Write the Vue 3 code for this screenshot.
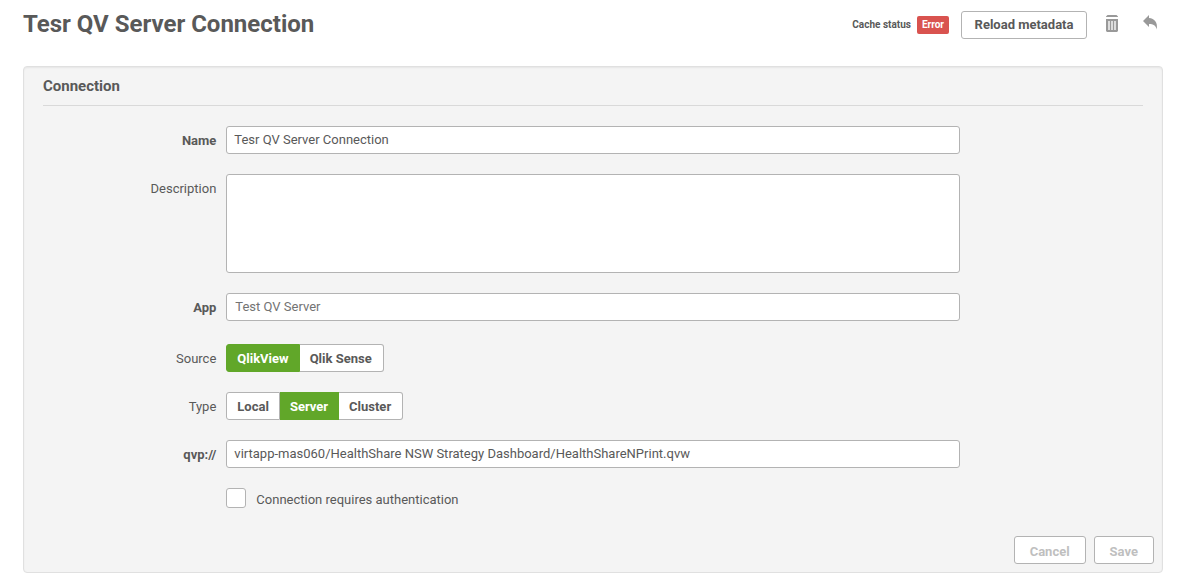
<script setup>
import { ref } from 'vue'

const name = ref('Tesr QV Server Connection')
const description = ref('')
const app = ref('Test QV Server')
const path = ref('virtapp-mas060/HealthShare NSW Strategy Dashboard/HealthShareNPrint.qvw')
const authentication = ref(false)

const sources = ['QlikView', 'Qlik Sense']
const source = ref('QlikView')
const types = ['Local', 'Server', 'Cluster']
const type = ref('Server')
</script>

<template>
  <div class="page">
    <header class="header">
      <h1 class="title">Tesr QV Server Connection</h1>
      <div class="tools">
        <span class="status">Cache status</span>
        <span class="badge">Error</span>
        <button type="button" class="btn reload">Reload metadata</button>
        <button type="button" class="icon-btn" aria-label="Delete">
          <svg width="12" height="17" viewBox="0 0 12 17">
            <path d="M0 2V1.500L1.500 0H10.500L12 1.500V2Z" fill="#999" />
            <path d="M0 4H12V16L11 17H1L0 16Z" fill="#999" />
            <path d="M2 6h2v9H2zM5 6h2v9H5zM8 6h2v9H8z" fill="#ddd" />
          </svg>
        </button>
        <button type="button" class="icon-btn back" aria-label="Back">
          <svg width="15" height="15" viewBox="0 0 15 15">
            <path d="M0 6L6 0V3C11.500 3.500 14.800 7 13.800 14.500C12.800 10.500 10.500 9 6 9V12Z" fill="#999" />
          </svg>
        </button>
      </div>
    </header>

    <form class="panel" @submit.prevent>
      <h2 class="legend">Connection</h2>

      <div class="rows">
        <div class="row">
          <label class="label strong" for="name">Name</label>
          <input id="name" v-model="name" class="field" type="text" />
        </div>
        <div class="row">
          <label class="label" for="description">Description</label>
          <textarea id="description" v-model="description" class="field area"></textarea>
        </div>
        <div class="row app-row">
          <label class="label strong" for="app">App</label>
          <input id="app" v-model="app" class="field muted" type="text" />
        </div>
        <div class="row" role="group" aria-labelledby="source-label">
          <span id="source-label" class="label">Source</span>
          <div class="group">
            <button
              v-for="s in sources"
              :key="s"
              type="button"
              class="btn segment"
              :class="{ active: s === source }"
              :aria-pressed="s === source"
              @click="source = s"
            >{{ s }}</button>
          </div>
        </div>
        <div class="row" role="group" aria-labelledby="type-label">
          <span id="type-label" class="label">Type</span>
          <div class="group">
            <button
              v-for="t in types"
              :key="t"
              type="button"
              class="btn segment"
              :class="{ active: t === type }"
              :aria-pressed="t === type"
              @click="type = t"
            >{{ t }}</button>
          </div>
        </div>
        <div class="row">
          <label class="label strong" for="path">qvp://</label>
          <input id="path" v-model="path" class="field" type="text" />
        </div>
        <div class="row">
          <div class="check">
            <input id="auth" v-model="authentication" type="checkbox" class="box" />
            <label for="auth">Connection requires authentication</label>
          </div>
        </div>
      </div>

      <div class="actions">
        <button type="button" class="btn action" disabled>Cancel</button>
        <button type="submit" class="btn action" disabled>Save</button>
      </div>
    </form>
  </div>
</template>

<style>
body {
  background: #fff;
}
</style>

<style scoped>
.page {
  padding: 0 29px 15px 23px;
  font-family: Roboto, "Liberation Sans", sans-serif;
  font-size: 13px;
  line-height: 20px;
  color: #595959;
}

.page *,
.page {
  box-sizing: border-box;
}

.header {
  display: flex;
  justify-content: space-between;
  align-items: flex-start;
  height: 66px;
}

.title {
  margin: 8px 0 0;
  font-size: 24px;
  line-height: 32px;
  font-weight: 700;
}

.tools {
  display: flex;
  align-items: center;
  margin-top: 11px;
  padding-right: 5px;
}

.status {
  font-size: 10px;
  font-weight: 700;
}

.badge {
  margin: 0 12px 0 6px;
  padding: 0 5px;
  border-radius: 2px;
  background: #d9534f;
  color: #fff;
  font-size: 10px;
  line-height: 18px;
  font-weight: 700;
}

.btn {
  height: 28px;
  margin: 0;
  padding: 0 10px;
  border: 1px solid #b3b3b3;
  border-radius: 3px;
  background: #fff;
  color: #595959;
  font: 700 13px/20px Roboto, "Liberation Sans", sans-serif;
  white-space: nowrap;
}

.reload {
  min-width: 126px;
  margin-right: 19px;
}

.icon-btn {
  display: flex;
  padding: 0;
  border: 0;
  background: none;
  margin-bottom: 3px;
}

.back {
  margin: 0 0 5px 25px;
}

.panel {
  padding: 9px 8px 8px 19px;
  border: 1px solid #e0e0e0;
  border-radius: 4px;
  background: #f4f4f4;
  box-shadow: inset 0 1px 2px rgba(0, 0, 0, 0.06);
}

.legend {
  margin: 0 11px 20px 0;
  padding-bottom: 9px;
  border-bottom: 1px solid #d9d9d9;
  font-size: 15px;
  line-height: 20px;
  font-weight: 700;
}

.rows {
  display: flex;
  flex-direction: column;
  gap: 20px;
  margin-right: 11px;
}

.row {
  display: grid;
  grid-template-columns: 2fr 8fr 2fr;
  align-items: start;
}

.app-row {
  margin-bottom: 3px;
}

.label {
  padding: 5px 10px 0 0;
  text-align: right;
}

.strong {
  font-weight: 700;
}

.field {
  display: block;
  width: 100%;
  height: 28px;
  margin: 0;
  padding: 0 7px 1px;
  border: 1px solid #b3b3b3;
  border-radius: 3px;
  background: #fff;
  color: #595959;
  font: 400 13px/20px Roboto, "Liberation Sans", sans-serif;
}

.area {
  height: 99px;
  resize: none;
}

.muted {
  padding-left: 8px;
  color: #737373;
}

.group {
  display: flex;
}

.segment {
  padding-top: 2px;
  border-radius: 0;
}

.segment + .segment {
  border-left-width: 0;
}

.segment:first-child {
  border-radius: 3px 0 0 3px;
}

.segment:last-child {
  padding-right: 11px;
  border-radius: 0 3px 3px 0;
}

.segment.active {
  border-color: #61a729;
  background: #61a729;
  color: #fff;
}

.check {
  grid-column: 2;
  display: flex;
  align-items: center;
  gap: 10px;
  height: 20px;
}

.check label {
  padding-top: 3px;
}

.box {
  appearance: none;
  width: 20px;
  height: 20px;
  margin: 0;
  border: 1px solid #b3b3b3;
  border-radius: 3px;
  background: #fff;
}

.box:checked {
  background: #61a729;
}

.actions {
  display: flex;
  justify-content: flex-end;
  gap: 8px;
  margin-top: 28px;
}

.action {
  padding: 3px 15px 0;
}

.action:disabled {
  color: #bfbfbf;
}
</style>
